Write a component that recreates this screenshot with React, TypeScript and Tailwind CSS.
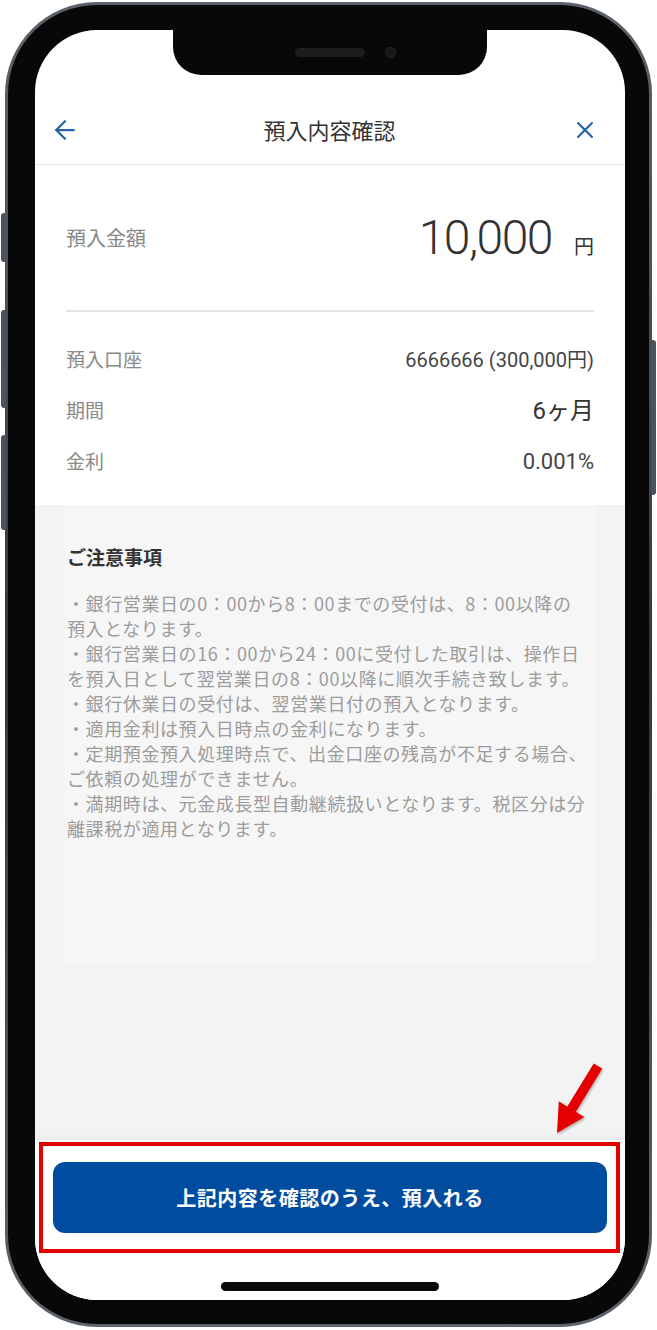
import { ArrowLeft, X } from 'lucide-react'

const NOTES: string[][] = [
  ['・銀行営業日の0：00から8：00までの受付は、8：00以降の', '預入となります。'],
  ['・銀行営業日の16：00から24：00に受付した取引は、操作日', 'を預入日として翌営業日の8：00以降に順次手続き致します。'],
  ['・銀行休業日の受付は、翌営業日付の預入となります。'],
  ['・適用金利は預入日時点の金利になります。'],
  ['・定期預金預入処理時点で、出金口座の残高が不足する場合、', 'ご依頼の処理ができません。'],
  ['・満期時は、元金成長型自動継続扱いとなります。税区分は分', '離課税が適用となります。'],
]

const DETAILS = [
  { label: '預入口座', value: '6666666 (300,000円)', cls: 'text-[20px] text-[#444]' },
  { label: '期間', value: '6ヶ月', cls: 'text-[24px] text-[#333]' },
  { label: '金利', value: '0.001%', cls: 'text-[22px] text-[#444]' },
]

function RedArrow() {
  return (
    <svg
      width="64"
      height="80"
      viewBox="0 0 64 80"
      className="absolute left-[545px] top-[1060px] drop-shadow-[1px_2px_1px_rgba(0,0,0,0.25)]"
    >
      <polygon
        points="57.3,8.6 30.9,51.7 39.4,56.9 12,73 13.8,41.3 22.3,46.5 48.7,3.4"
        fill="#e50000"
      />
    </svg>
  )
}

export default function App() {
  return (
    <div className="relative w-[657px] h-[1330px] bg-white overflow-hidden font-['Roboto','Noto_Sans_CJK_JP',sans-serif]">
      {/* side buttons */}
      <div className="absolute left-[1px] top-[213px] w-[5px] h-[49px] rounded-l-[3px] bg-[#4d535b]" />
      <div className="absolute left-[1px] top-[310px] w-[5px] h-[98px] rounded-l-[3px] bg-[#4d535b]" />
      <div className="absolute left-[1px] top-[435px] w-[5px] h-[95px] rounded-l-[3px] bg-[#4d535b]" />
      <div className="absolute left-[651px] top-[340px] w-[5px] h-[155px] rounded-r-[3px] bg-[#4d535b]" />

      {/* phone body */}
      <div className="ml-[5px] mt-[2px] w-[647px] h-[1325px] rounded-[92px] bg-gradient-to-b from-[#5d636b] via-[#33373d] to-[#5d636b] p-[3px]">
        <div className="w-full h-full rounded-[89px] bg-[#080808] pl-[27px] pr-[24px] pt-[25px] pb-[24px]">
          <div className="relative w-[590px] h-[1270px] rounded-[62px] bg-white overflow-hidden flex flex-col">
            {/* notch */}
            <div className="absolute left-[138px] top-0 w-[314px] h-[45px] rounded-b-[28px] bg-[#080808] flex items-center justify-center gap-[20px] pl-[30px]">
              <div className="w-[70px] h-[9px] rounded-full bg-[#1c1c1e]" />
              <div className="w-[11px] h-[11px] rounded-full bg-[#17171a] border border-[#262629]" />
            </div>

            <div className="h-[65px] shrink-0" />

            {/* Header */}
            <div className="h-[70px] shrink-0 flex items-center justify-between pl-[15px] pr-[26px] border-b border-[#e8e8e8]">
              <ArrowLeft size={30} strokeWidth={1.8} className="text-[#2563a8]" />
              <h1 className="text-[22px] text-[#333] font-['Noto_Sans_CJK_JP',sans-serif] ml-[8px]">預入内容確認</h1>
              <X size={28} strokeWidth={1.8} className="text-[#2563a8]" />
            </div>

            {/* Amount */}
            <div className="h-[145px] shrink-0 flex items-center justify-between px-[31px]">
              <span className="text-[20px] text-[#888] font-['Noto_Sans_CJK_JP',sans-serif]">預入金額</span>
              <div className="flex items-baseline">
                <span className="text-[48px] font-light tracking-[-1.5px] text-[#333] leading-none">10,000</span>
                <span className="ml-[22px] text-[20px] text-[#333] font-['Noto_Sans_CJK_JP',sans-serif]">円</span>
              </div>
            </div>
            <div className="mx-[31px] border-t-2 border-[#e4e4e4]" />

            {/* Details */}
            <div className="pt-[22px] pb-[18px] px-[31px] shrink-0">
              {DETAILS.map((row) => (
                <div key={row.label} className="h-[51px] flex items-center justify-between">
                  <span className="text-[19px] text-[#888] font-['Noto_Sans_CJK_JP',sans-serif]">{row.label}</span>
                  <span className={row.cls}>{row.value}</span>
                </div>
              ))}
            </div>

            {/* Notes */}
            <div className="flex-1 bg-[#f3f3f3]">
              <div className="mx-[30px] h-[458px] bg-[#f6f6f6] pl-[2px] pt-[40px] font-['Noto_Sans_CJK_JP',sans-serif]">
                <h2 className="text-[19px] font-bold text-[#333] leading-[24px]">ご注意事項</h2>
                <div className="mt-[22px] text-[18px] leading-[25px] tracking-[0.6px] text-[#9c9c9c] whitespace-nowrap">
                  {NOTES.map((lines, i) => (
                    <p key={i}>
                      {lines.map((line, j) => (
                        <span key={j} className="block">{line}</span>
                      ))}
                    </p>
                  ))}
                </div>
              </div>
            </div>

            {/* Bottom action */}
            <div className="h-[160px] shrink-0 bg-white shadow-[0_-2px_6px_rgba(0,0,0,0.06)] flex flex-col items-center pt-[22px]">
              <button className="w-[554px] h-[71px] rounded-[12px] bg-[#004d9f] text-white text-[20px] font-bold font-['Noto_Sans_CJK_JP',sans-serif] tracking-[0.5px]">
                上記内容を確認のうえ、預入れる
              </button>
              <div className="mt-[49px] w-[218px] h-[9px] rounded-full bg-[#0a0a0a]" />
            </div>
          </div>
        </div>
      </div>

      {/* annotation */}
      <div className="absolute left-[39px] top-[1142px] w-[581px] h-[111px] border-[4px] border-[#e50000]" />
      <RedArrow />
    </div>
  )
}
